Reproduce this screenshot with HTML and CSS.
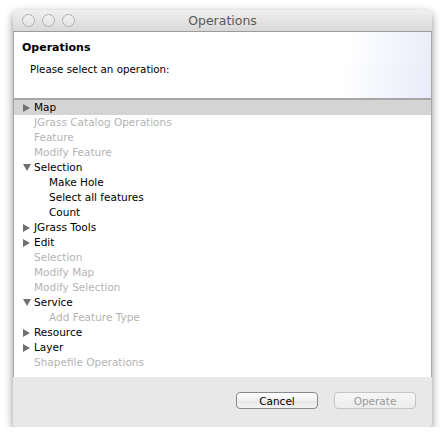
FILE: index.html
```html
<!DOCTYPE html>
<html>
<head>
<meta charset="utf-8">
<link rel="stylesheet" href="styles.css">
</head>
<body>
<div class="window">
  <div class="titlebar">
    <div class="lights">
      <span class="light"></span><span class="light"></span><span class="light"></span>
    </div>
    <div class="title">Operations</div>
  </div>
  <div class="header">
    <div class="h-title">Operations</div>
    <div class="h-msg">Please select an operation:</div>
  </div>
  <div class="tree">
    <div class="row sel"><span class="tri right"></span>Map</div>
    <div class="row dis ind">JGrass Catalog Operations</div>
    <div class="row dis ind">Feature</div>
    <div class="row dis ind">Modify Feature</div>
    <div class="row"><span class="tri down"></span>Selection</div>
    <div class="row ind2">Make Hole</div>
    <div class="row ind2">Select all features</div>
    <div class="row ind2">Count</div>
    <div class="row"><span class="tri right"></span>JGrass Tools</div>
    <div class="row"><span class="tri right"></span>Edit</div>
    <div class="row dis ind">Selection</div>
    <div class="row dis ind">Modify Map</div>
    <div class="row dis ind">Modify Selection</div>
    <div class="row"><span class="tri down"></span>Service</div>
    <div class="row dis ind2">Add Feature Type</div>
    <div class="row"><span class="tri right"></span>Resource</div>
    <div class="row"><span class="tri right"></span>Layer</div>
    <div class="row dis ind">Shapefile Operations</div>
  </div>
  <div class="footer">
    <button class="btn">Cancel</button>
    <button class="btn disabled">Operate</button>
  </div>
</div>
</body>
</html>
```

FILE: styles.css
```css
html, body {
  margin: 0;
  padding: 0;
  background: #ffffff;
}
body {
  font-family: "DejaVu Sans", "Lucida Grande", sans-serif;
  font-size: 10.5px;
  color: #000;
}
.window {
  margin: 10px 0 0 13px;
  width: 419px;
  height: 417px;
  border-radius: 5px 5px 3px 3px;
  box-shadow: 0 3px 9px rgba(0,0,0,0.45);
  background: #e8e8e8;
  display: flex;
  flex-direction: column;
  overflow: hidden;
}
.titlebar {
  height: 21px;
  flex: none;
  background: linear-gradient(#f0f0f0, #d8d8d8);
  border-bottom: 1px solid #9c9c9c;
  display: flex;
  align-items: center;
  position: relative;
}
.lights {
  display: flex;
  gap: 7px;
  padding-left: 9px;
}
.light {
  width: 11px;
  height: 11px;
  border-radius: 50%;
  border: 1px solid #b0b0b0;
  background: linear-gradient(#f2f2f2, #e2e2e2);
}
.title {
  position: absolute;
  left: 0;
  right: 0;
  text-align: center;
  font-family: "DejaVu Sans", sans-serif;
  font-size: 12.5px;
  color: #5a5a5a;
  top: 3px;
}
.header {
  height: 68px;
  flex: none;
  border-left: 1px solid #a8a8a8;
  border-right: 1px solid #a8a8a8;
  border-bottom: 2px solid #a6a6a6;
  background:
    radial-gradient(circle 110px at 125% 125%, #dae1f5 0%, #dfe5f7 88%, rgba(223,229,247,0) 90%),
    linear-gradient(100deg, rgba(255,255,255,0) 78%, #e8ecf9 100%),
    radial-gradient(circle 170px at 140% 135%, #e6ebf9 0%, #edf0fb 65%, rgba(255,255,255,0) 100%),
    #ffffff;
  padding: 9px 0 0 8px;
  box-sizing: border-box;
}
.h-title {
  font-weight: bold;
  font-size: 11px;
}
.h-msg {
  margin: 9px 0 0 8px;
  font-size: 10.3px;
}
.tree {
  flex: 1;
  background: #fff;
  border-left: 1px solid #a8a8a8;
  border-right: 1px solid #a8a8a8;
}
.row {
  height: 15px;
  line-height: 15px;
  padding-left: 9px;
  font-size: 10.5px;
  white-space: nowrap;
  display: flex;
  align-items: center;
}
.row.sel {
  background: #d4d4d4;
}
.row.dis {
  color: #b4b4b4;
}
.row.ind {
  padding-left: 20px;
}
.row.ind2 {
  padding-left: 35px;
}
.tri {
  width: 11px;
  flex: none;
  display: flex;
  align-items: center;
}
.tri.right::before {
  content: "";
  border-left: 7px solid #707070;
  border-top: 4px solid transparent;
  border-bottom: 4px solid transparent;
}
.tri.down::before {
  content: "";
  border-top: 7px solid #707070;
  border-left: 4px solid transparent;
  border-right: 4px solid transparent;
}
.footer {
  height: 50px;
  flex: none;
  display: flex;
  justify-content: flex-end;
  align-items: flex-start;
  padding: 15px 16px 0 0;
  box-sizing: border-box;
  gap: 16px;
}
.btn {
  width: 82px;
  height: 17px;
  border: 1px solid #8a8a8a;
  border-radius: 4px;
  background: linear-gradient(#ffffff, #f0f0f0 50%, #e6e6e6 51%, #f4f4f4);
  font-family: "DejaVu Sans", sans-serif;
  font-size: 10.5px;
  padding: 0;
  color: #000;
}
.btn.disabled {
  color: #9a9a9a;
  border-color: #c4c4c4;
  background: linear-gradient(#f6f6f6, #ececec);
}
```
